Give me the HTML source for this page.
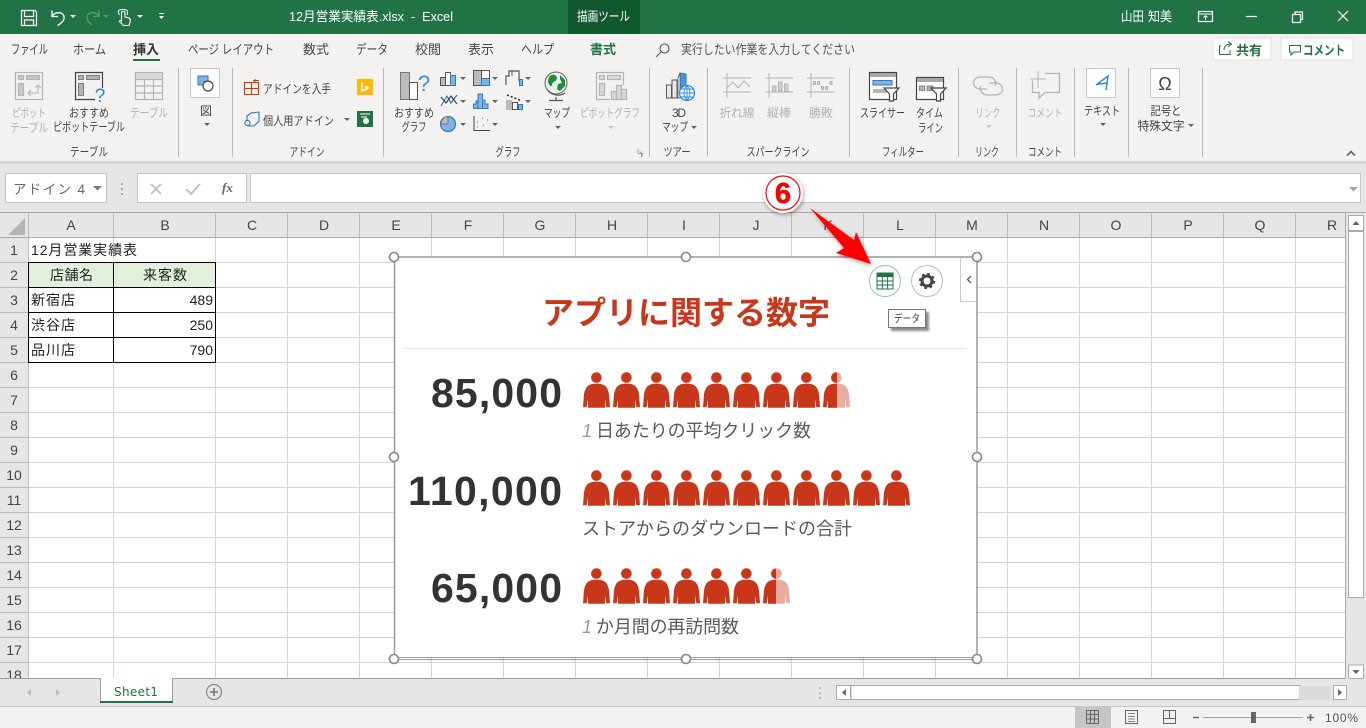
<!DOCTYPE html>
<html lang="ja"><head><meta charset="utf-8"><title>12月営業実績表.xlsx - Excel</title>
<style>
html,body{margin:0;padding:0;width:1366px;height:728px;overflow:hidden;background:#fff}
svg{display:block;position:absolute;left:0;top:0}
text{font-family:"Liberation Sans","Noto Sans CJK JP",sans-serif;font-size:11px;fill:#444}
.w text{fill:#fff;font-size:13px;white-space:pre}
.tab text{font-size:13px;fill:#444;text-anchor:start}
.l text{text-anchor:middle;fill:#444;font-size:12px}
.g text{text-anchor:middle;fill:#b1b1b1;font-size:12px}
.h text{text-anchor:middle;fill:#444;font-size:14px}
.c text{font-size:14px;fill:#222}
.sub text{font-size:18px;fill:#595959}
.num text{font-size:41px;font-weight:700;fill:#333;text-anchor:end}
</style></head><body>
<svg width="1366" height="728" viewBox="0 0 1366 728" xmlns="http://www.w3.org/2000/svg">
<defs>
<g id="p" transform="translate(0 -.7)"><circle cx="13.4" cy="5.3" r="5.3"/><path d="M13.5 11.3C18 11.3 21 12.3 23 14.5C25 17 25.7 20 26.1 23L27 35H23.3L22 27V35.4H5V27L3.7 35H0L.9 23C1.3 20 2 17 4 14.5C6 12.3 9 11.3 13.5 11.3Z"/></g>
<path id="ca" d="M0 0H6L3 3Z"/>
<filter id="sh" x="-30%" y="-30%" width="160%" height="160%"><feDropShadow dx="1" dy="2" stdDeviation="2" flood-color="#000" flood-opacity=".35"/></filter>
<filter id="sh2" x="-30%" y="-30%" width="170%" height="170%"><feDropShadow dx="3" dy="3" stdDeviation="1" flood-color="#000" flood-opacity=".45"/></filter>
<clipPath id="c1"><rect x="800" y="360" width="37" height="60"/></clipPath>
<clipPath id="c3"><rect x="760" y="560" width="16" height="60"/></clipPath>
</defs>

<!-- backgrounds -->
<rect width="1366" height="34" fill="#217346"/>
<rect x="568" width="72" height="34" fill="#10592f"/>
<rect y="34" width="1366" height="127" fill="#f3f2f1"/>
<rect y="161" width="1366" height="52" fill="#e6e6e6"/>
<rect y="161" width="1366" height="3" fill="#d6d6d6"/>

<!-- title bar -->
<g fill="none" stroke="#fff" stroke-width="1.2">
<path d="M21.5 10.5H35L36.5 12V25.5H21.5Z"/><path d="M24.5 10.5V16.5H33.5V10.5M24.5 25.5V20H33.5V25.5"/>
<path d="M52 10.5V16.5H58M52.5 16C55 11.5 63 11.5 64 16.5C64.8 20.5 61 23.5 57.5 25.5" stroke-width="1.3"/>
<path d="M99 10.5V16.5H93M98.5 16C96 11.5 88 11.5 87 16.5C86.4 20.5 89 23 92 25" stroke="#5c9b78" stroke-width="1.3"/>
<path d="M121.5 21V13C121.5 11 125 11 125 13V17L129 18C130.5 18.5 130.5 20 130 22L129 25.5H123.5L119.5 21.5C119.5 20.5 120.5 20 121.5 21Z" stroke-width="1.1"/>
<path d="M119.5 15C116.5 10 120 9.5 123 9.5C126 9.5 129 10 127 15" stroke-width="1"/>
<rect x="1198.5" y="11.5" width="14" height="10"/><path d="M1198.5 14H1212.5M1205.5 20V16M1203.5 17.5L1205.5 15.5L1207.5 17.5" stroke-width=".9"/>
<path d="M1246 16.5H1257" stroke-width="1.2"/>
<rect x="1292.5" y="14.5" width="8" height="8"/><path d="M1295 14V12H1302.5V19.5H1301"/>
<path d="M1338 11L1348 21M1348 11L1338 21" stroke-width="1.2"/>
</g>
<g fill="#fff"><use href="#ca" x="70" y="15"/><use href="#ca" x="137" y="15"/><path d="M159 13H164V14H159ZM159 16H164L161.5 19Z"/></g>
<use href="#ca" x="103" y="15" fill="#5c9b78"/>
<g class="w">
<text x="289" y="21" textLength="164" lengthAdjust="spacingAndGlyphs">12月営業実績表.xlsx  -  Excel</text>
<text x="577" y="21" textLength="53" lengthAdjust="spacingAndGlyphs">描画ツール</text>
<text x="1121" y="21" textLength="23" lengthAdjust="spacingAndGlyphs">山田</text>
<text x="1148" y="21" textLength="24" lengthAdjust="spacingAndGlyphs">知美</text>
</g>

<!-- ribbon tabs -->
<g class="tab">
<text x="11" y="54" textLength="37" lengthAdjust="spacingAndGlyphs">ファイル</text>
<text x="73" y="54" textLength="33" lengthAdjust="spacingAndGlyphs">ホーム</text>
<text x="133" y="54" textLength="26" style="font-weight:700;fill:#333">挿入</text>
<text x="188" y="54" textLength="86" lengthAdjust="spacingAndGlyphs">ページ レイアウト</text>
<text x="303" y="54" textLength="26">数式</text>
<text x="356" y="54" textLength="32" lengthAdjust="spacingAndGlyphs">データ</text>
<text x="415" y="54" textLength="26">校閲</text>
<text x="468" y="54" textLength="26">表示</text>
<text x="521" y="54" textLength="33" lengthAdjust="spacingAndGlyphs">ヘルプ</text>
<text x="590" y="54" textLength="26" style="fill:#217346;font-weight:700">書式</text>
<text x="681" y="54" textLength="174" lengthAdjust="spacingAndGlyphs" style="fill:#555">実行したい作業を入力してください</text>
</g>
<rect x="133" y="59" width="27" height="2" fill="#217346"/>
<g fill="none" stroke="#555" stroke-width="1.1"><circle cx="664.5" cy="48.5" r="4.5"/><path d="M661 52L656 57"/></g>
<rect x="1213" y="38" width="58" height="22" fill="#fff" stroke="#e2e2e2"/>
<rect x="1281" y="38" width="72" height="22" fill="#fff" stroke="#e2e2e2"/>
<g fill="none" stroke="#217346"><path d="M1221 46H1219.5V54.5H1230V50M1224 50C1224 46 1227 44 1231 44M1228 41.5L1231.5 44L1228 47"/><path d="M1289.5 45.5H1300.5V52H1294L1291 55V52H1289.5Z"/></g>
<text x="1236" y="55" textLength="26" style="fill:#217346;font-size:13px;font-weight:700">共有</text>
<text x="1303" y="55" textLength="42" lengthAdjust="spacingAndGlyphs" style="fill:#217346;font-size:13px;font-weight:700">コメント</text>

<!-- ribbon dividers -->
<path d="M178.5 68V157M232.5 68V157M383.5 68V157M649.5 68V157M707.5 68V157M849.5 68V157M958.5 68V157M1016.5 68V157M1074.5 68V157M1128.5 68V157M1202.5 68V157" stroke="#b8b8b8" fill="none"/>

<!-- ribbon icons: table group -->
<g fill="none" stroke="#b4b4b4" stroke-width="1.2">
<rect x="15.5" y="72.5" width="27" height="27" fill="#f3f2f1"/><rect x="18.5" y="75.5" width="5" height="4" fill="#c8c8c8"/><rect x="26.5" y="75.5" width="13" height="4" fill="#c8c8c8"/><rect x="18.5" y="83.5" width="5" height="12" fill="#c8c8c8"/>
<path d="M28 93H38V85M35 88L38 85L41 88M31 90L28 93L31 96" stroke-width="1"/>
<rect x="135.5" y="72.5" width="27" height="27"/><path d="M135.5 79.5H162.5M135.5 86H162.5M135.5 93H162.5M144.5 79.5V99.5M153.5 79.5V99.5"/><path d="M136 73H162V79H136Z" fill="#d8d8d8" stroke="none"/>
</g>
<g fill="none" stroke="#444" stroke-width="1.2"><path d="M102.5 88V72.5H75.5V99.5H95"/><rect x="78.5" y="75.5" width="5" height="4" fill="#b3b3b3" stroke="#666" stroke-width=".8"/><rect x="86.5" y="75.5" width="13" height="4" fill="#b3b3b3" stroke="#666" stroke-width=".8"/><rect x="78.5" y="83.5" width="5" height="12" fill="#b3b3b3" stroke="#666" stroke-width=".8"/></g>
<text x="100" y="102" style="font-size:19px;fill:#2e86d0" text-anchor="middle">?</text>
<rect x="190.5" y="68.5" width="29" height="29" fill="#fff" stroke="#c8c8c8"/>
<path d="M198 76H208V81.5H204V85H198Z" fill="#7fb3e4" stroke="#2b79c2"/><circle cx="208" cy="86" r="5" fill="#fff" stroke="#444" stroke-width="1.2"/>
<use href="#ca" x="204" y="123" fill="#666"/>

<!-- add-ins -->
<path d="M244.5 82.5H258.5V94.5H244.5ZM251.5 82.5V94.5M244.5 88.5H258.5M255 83V79M253 80.5H259" fill="none" stroke="#d83b01" stroke-width="1.1"/>
<rect x="357" y="79" width="16" height="16" fill="#ffb900"/><path d="M362 82V91L368.5 88L365 86.3" fill="none" stroke="#fff" stroke-width="1.6"/>
<path d="M252 113L259 112V121L254 126H249L246 123" fill="none" stroke="#2b79c2" stroke-width="1.1"/><path d="M252 112.5L247 116V120" fill="none" stroke="#2b79c2" stroke-width="1.1"/><circle cx="247.5" cy="123" r="2.6" fill="#f3f2f1" stroke="#2b79c2" stroke-width="1.1"/>
<rect x="357" y="111" width="16" height="16" fill="#217346"/><circle cx="366" cy="121" r="3" fill="#fff"/><path d="M360 114H370M361 117H367" stroke="#fff"/>
<use href="#ca" x="344" y="118" fill="#666"/>

<!-- charts -->
<rect x="400.5" y="72.5" width="9" height="27" fill="#bbb" stroke="#777"/><rect x="409.5" y="82.5" width="8" height="17" fill="#fff" stroke="#555"/>
<text x="424" y="91" style="font-size:22px;fill:#3a8fd6" text-anchor="middle">?</text>
<g stroke-width="1">
<path d="M440.5 85.5V77.5H445.5V85.5Z" fill="#bbb" stroke="#555"/><path d="M445.5 85.5V72.5H450.5V85.5Z" fill="#fff" stroke="#555"/><path d="M450.5 85.5V75.5H455.5V85.5Z" fill="#7fb3e4" stroke="#2b79c2"/>
<path d="M441 106L447 96L451 103L457 95" fill="none" stroke="#2b79c2" stroke-width="1.2"/><path d="M441 97L446 103L451 96L457 104" fill="none" stroke="#444" stroke-width="1.2"/>
<circle cx="448" cy="124" r="7.5" fill="#7fb3e4" stroke="#2b79c2" stroke-width="1.2"/><path d="M448 124H441C441 120 444 116.5 448 116.5Z" fill="#bbb" stroke="#777"/>
<rect x="473.5" y="70.5" width="8" height="15" fill="#bbb" stroke="#555"/><rect x="481.5" y="70.5" width="8" height="8" fill="#fff" stroke="#555"/><rect x="481.5" y="78.5" width="8" height="7" fill="#7fb3e4" stroke="#2b79c2"/>
<path d="M473.5 108.5V104H476V101H478V94H482.5V100H485V104H488V108.5Z" fill="#7fb3e4" stroke="#2b79c2"/><path d="M478 108V101M482.5 108V101" stroke="#2b79c2"/>
<path d="M474 116V130.5H490" fill="none" stroke="#444"/><path d="M477 122h2M482 118h2M477 127h2M483 125h2M487 120h1" stroke="#2b79c2" stroke-dasharray="1 1"/>
<path d="M506 85V76H509V71H519V80H522V85" fill="none" stroke="#555" stroke-width="1.2"/><path d="M512 71V76" stroke="#555"/><rect x="519.5" y="79.5" width="3" height="6" fill="#7fb3e4" stroke="#2b79c2"/>
<rect x="506" y="100" width="6" height="10" fill="#bbb"/><rect x="512.5" y="102.5" width="5" height="7" fill="#fff" stroke="#555"/><rect x="518.5" y="104.5" width="4" height="5" fill="#7fb3e4" stroke="#2b79c2"/><path d="M507 95L522 101" stroke="#333" stroke-width="1.6" stroke-dasharray="2 2"/>
</g>
<g fill="#666"><use href="#ca" x="460" y="77"/><use href="#ca" x="460" y="100"/><use href="#ca" x="460" y="123"/><use href="#ca" x="492" y="77"/><use href="#ca" x="492" y="100"/><use href="#ca" x="492" y="123"/><use href="#ca" x="525" y="77"/><use href="#ca" x="525" y="100"/><use href="#ca" x="555" y="126"/></g>
<circle cx="556" cy="83" r="11" fill="#e8f2e8" stroke="#666"/><path d="M549 77C552 73 557 75 557 78C557 82 552 81 552 85C551 88 548 84 548 81ZM560 75L565 80L565 86L560 91L557 89L558 84L562 83L560 79Z" fill="#218a3f"/><path d="M547 89C550 95 559 97 565 93M556 97V100M549 100.5H563" fill="none" stroke="#555" stroke-width="1.2"/>
<g fill="none" stroke="#b4b4b4" stroke-width="1.2"><path d="M623.5 85V72.5H596.5V99.5H610"/><rect x="599.5" y="75.5" width="5" height="4" fill="#d8d8d8"/><rect x="607.5" y="75.5" width="13" height="4" fill="#d8d8d8"/><rect x="599.5" y="83.5" width="5" height="12" fill="#d8d8d8"/><rect x="611.5" y="91.5" width="5" height="8" fill="#d8d8d8"/><rect x="616.5" y="85.5" width="5" height="14" fill="#d8d8d8"/><rect x="621.5" y="89.5" width="5" height="10" fill="#d8d8d8"/></g>
<use href="#ca" x="608" y="126" fill="#c0c0c0"/>

<!-- 3D map -->
<path d="M666.5 85H671.5V98H666.5ZM672 80H677V98H672Z" fill="#e8e8e8" stroke="#555"/><path d="M680 73L686 74V92H680Z" fill="#4a96dc" stroke="#2b79c2"/><path d="M678 98V78L680 73V98Z" fill="#fff" stroke="#555" stroke-width=".8"/>
<circle cx="687" cy="93" r="7.5" fill="#fff" stroke="#2b8cdc" stroke-width="1.3"/><path d="M679.5 93H694.5M687 85.5V100.5M681 89H693M681 97H693M687 85.5C683 90 683 96 687 100.5M687 85.5C691 90 691 96 687 100.5" fill="none" stroke="#2b8cdc" stroke-width=".9"/>
<use href="#ca" x="691" y="126" fill="#666"/>

<!-- sparklines -->
<g fill="none" stroke="#b4b4b4" stroke-width="1">
<path d="M723 78H751M723 92H751M727 73V98"/><path d="M727 88L733 82L738 88L744 81L750 87"/>
<path d="M765 78H793M765 92H793M769 73V98"/><path d="M772.5 91V86H776V91ZM778.5 91V82H782V91ZM784.5 91V84H788V91Z" fill="#d0d0d0"/>
<path d="M807 78H835M807 92H835M811 73V98"/><path d="M813.5 81.5h2v3h-2zM817.5 81.5h2v3h-2zM821.5 86.5h2v3h-2zM825.5 86.5h2v3h-2zM830 81.5h2v3h-2z" fill="#d0d0d0"/>
</g>

<!-- filters -->
<rect x="869.5" y="72.5" width="27" height="27" fill="#fff" stroke="#444" stroke-width="1.2"/><rect x="870" y="73" width="26" height="4" fill="#a8a8a8"/><rect x="873" y="80.5" width="19" height="4.5" fill="#7fb3e4" stroke="#2b79c2"/><rect x="873" y="89" width="14" height="4" fill="#b3b3b3"/>
<path d="M884 88H899L893.5 94V101H889.5V94Z" fill="#fff" stroke="#444" stroke-width="1.2"/>
<rect x="916.5" y="77.5" width="27" height="22" fill="#fff" stroke="#444" stroke-width="1.2"/><rect x="917" y="78" width="26" height="4" fill="#a8a8a8"/><rect x="919.5" y="86" width="5" height="4.5" fill="#b3b3b3" stroke="#666" stroke-width=".7"/><rect x="927" y="86" width="6" height="4.5" fill="#b3b3b3" stroke="#666" stroke-width=".7"/>
<path d="M931 88H946L940.5 94V101H936.5V94Z" fill="#fff" stroke="#444" stroke-width="1.2"/>

<!-- link / comment -->
<g fill="none" stroke="#b4b4b4" stroke-width="1.3"><path d="M987 89H981C971 89 971 77 981 77H988C995 77 997 83 995 86"/><path d="M989 83H995C1005 83 1005 95 995 95H988C981 95 979 89 981 86"/>
<path d="M1032.5 80.5V92.5H1039V98L1045 92.5H1059.5V73.5H1045"/><path d="M1030 79H1046M1038 71V88" stroke-width="1"/></g>
<use href="#ca" x="986" y="125" fill="#c0c0c0"/>

<!-- text / symbol -->
<rect x="1086.5" y="68.5" width="29" height="29" fill="#fff" stroke="#c8c8c8"/>
<path d="M1096 85L1108 76L1106 90M1096.5 84.5L1106.5 83" fill="none" stroke="#2f8bd6" stroke-width="1.5"/>
<use href="#ca" x="1100" y="123" fill="#666"/>
<rect x="1150.5" y="68.5" width="29" height="29" fill="#fff" stroke="#c8c8c8"/>
<text x="1165" y="90" text-anchor="middle" style="font-size:18px;fill:#444">Ω</text>
<use href="#ca" x="1188" y="124" fill="#666"/>
<path d="M1347 155.5L1351 151.5L1355 155.5" fill="none" stroke="#666" stroke-width="1.6"/>
<path d="M638 153.5H643M641.5 157.5V153.5M638 153V149M640 151.5L643 156" fill="none" stroke="#888" stroke-width=".8"/>

<!-- ribbon labels -->
<g class="l">
<text x="89" y="117" textLength="40" lengthAdjust="spacingAndGlyphs">おすすめ</text>
<text x="89" y="131" textLength="72" lengthAdjust="spacingAndGlyphs">ピボットテーブル</text>
<text x="206" y="115" textLength="12" lengthAdjust="spacingAndGlyphs">図</text>
<text x="414" y="117" textLength="40" lengthAdjust="spacingAndGlyphs">おすすめ</text>
<text x="414" y="131" textLength="25" lengthAdjust="spacingAndGlyphs">グラフ</text>
<text x="557" y="117" textLength="26" lengthAdjust="spacingAndGlyphs">マップ</text>
<text x="679" y="117" textLength="14">3D</text>
<text x="675" y="131" textLength="26" lengthAdjust="spacingAndGlyphs">マップ</text>
<text x="882.5" y="117" textLength="45" lengthAdjust="spacingAndGlyphs">スライサー</text>
<text x="929.5" y="117" textLength="27" lengthAdjust="spacingAndGlyphs">タイム</text>
<text x="930.5" y="132" textLength="25" lengthAdjust="spacingAndGlyphs">ライン</text>
<text x="1102" y="115" textLength="36" lengthAdjust="spacingAndGlyphs">テキスト</text>
<text x="1166" y="115" textLength="31" lengthAdjust="spacingAndGlyphs">記号と</text>
<text x="1161" y="130" textLength="47" lengthAdjust="spacingAndGlyphs">特殊文字</text>
<text x="89" y="156" textLength="38" lengthAdjust="spacingAndGlyphs">テーブル</text>
<text x="307" y="156" textLength="35" lengthAdjust="spacingAndGlyphs">アドイン</text>
<text x="508" y="156" textLength="25" lengthAdjust="spacingAndGlyphs">グラフ</text>
<text x="677" y="156" textLength="27" lengthAdjust="spacingAndGlyphs">ツアー</text>
<text x="778" y="156" textLength="63" lengthAdjust="spacingAndGlyphs">スパークライン</text>
<text x="903" y="156" textLength="42" lengthAdjust="spacingAndGlyphs">フィルター</text>
<text x="987" y="156" textLength="24" lengthAdjust="spacingAndGlyphs">リンク</text>
<text x="1045" y="156" textLength="34" lengthAdjust="spacingAndGlyphs">コメント</text>
</g>
<text x="263" y="93" textLength="68" lengthAdjust="spacingAndGlyphs" style="fill:#444;font-size:12px">アドインを入手</text>
<text x="263" y="125" textLength="71" lengthAdjust="spacingAndGlyphs" style="fill:#444;font-size:12px">個人用アドイン</text>
<g class="g">
<text x="29" y="117" textLength="34" lengthAdjust="spacingAndGlyphs">ピボット</text>
<text x="29" y="132" textLength="38" lengthAdjust="spacingAndGlyphs">テーブル</text>
<text x="149" y="117" textLength="38" lengthAdjust="spacingAndGlyphs">テーブル</text>
<text x="610" y="117" textLength="60" lengthAdjust="spacingAndGlyphs">ピボットグラフ</text>
<text x="737" y="117" textLength="35" lengthAdjust="spacingAndGlyphs">折れ線</text>
<text x="779" y="117" textLength="24">縦棒</text>
<text x="821" y="117" textLength="24">勝敗</text>
<text x="988" y="117" textLength="25" lengthAdjust="spacingAndGlyphs">リンク</text>
<text x="1045" y="117" textLength="35" lengthAdjust="spacingAndGlyphs">コメント</text>
</g>

<!-- formula bar -->
<rect x="5.5" y="173.5" width="101" height="29" fill="#fff" stroke="#c6c6c6"/>
<text x="13" y="194" textLength="72" style="font-size:13.5px;fill:#666">アドイン 4</text>
<path d="M93 186H102L97.5 190.5Z" fill="#777"/>
<path d="M122 183v2M122 188v2M122 193v2" stroke="#999" stroke-width="1.6"/>
<rect x="137.5" y="173.5" width="109" height="29" fill="#fff" stroke="#c6c6c6"/>
<path d="M151 184L161 194M161 184L151 194M186 189L191 194L200 184" fill="none" stroke="#bdbdbd" stroke-width="1.8"/>
<text x="222" y="192" style="font-family:'Liberation Serif',serif;font-style:italic;font-weight:700;font-size:13px;fill:#666">fx</text>
<rect x="250.5" y="173.5" width="1110" height="29" fill="#fff" stroke="#c6c6c6"/>
<path d="M1349 187H1358L1353.5 191.5Z" fill="#a5a5a5"/>

<!-- sheet -->
<rect y="213" width="1346" height="24" fill="#e6e6e6"/>
<rect y="213" width="28" height="466" fill="#e6e6e6"/>
<path d="M8 235L25 218V235Z" fill="#b5b5b5"/>
<path d="M29 262.5H1345M29 287.5H1345M29 312.5H1345M29 337.5H1345M29 362.5H1345M29 387.5H1345M29 412.5H1345M29 437.5H1345M29 462.5H1345M29 487.5H1345M29 512.5H1345M29 537.5H1345M29 562.5H1345M29 587.5H1345M29 612.5H1345M29 637.5H1345M29 662.5H1345" stroke="#d4d4d4" fill="none"/>
<path d="M113.5 237V678M215.5 237V678M287.5 237V678M359.5 237V678M431.5 237V678M503.5 237V678M575.5 237V678M647.5 237V678M719.5 237V678M791.5 237V678M863.5 237V678M935.5 237V678M1007.5 237V678M1079.5 237V678M1151.5 237V678M1223.5 237V678M1295.5 237V678" stroke="#d4d4d4" fill="none"/>
<path d="M28.5 213V678M0 262.5H28M0 287.5H28M0 312.5H28M0 337.5H28M0 362.5H28M0 387.5H28M0 412.5H28M0 437.5H28M0 462.5H28M0 487.5H28M0 512.5H28M0 537.5H28M0 562.5H28M0 587.5H28M0 612.5H28M0 637.5H28M0 662.5H28" stroke="#bbb" fill="none"/>
<path d="M113.5 213V237M215.5 213V237M287.5 213V237M359.5 213V237M431.5 213V237M503.5 213V237M575.5 213V237M647.5 213V237M719.5 213V237M791.5 213V237M863.5 213V237M935.5 213V237M1007.5 213V237M1079.5 213V237M1151.5 213V237M1223.5 213V237M1295.5 213V237" stroke="#bbb" fill="none"/>
<path d="M0 237.5H1346M0 212.5H1366" stroke="#aaa" fill="none"/>
<rect x="1345" y="213" width="1" height="466" fill="#aaa"/>

<g class="h">
<text x="71" y="230">A</text><text x="165" y="230">B</text><text x="252" y="230">C</text><text x="324" y="230">D</text><text x="396" y="230">E</text><text x="468" y="230">F</text><text x="540" y="230">G</text><text x="612" y="230">H</text><text x="684" y="230">I</text><text x="756" y="230">J</text><text x="828" y="230">K</text><text x="900" y="230">L</text><text x="972" y="230">M</text><text x="1044" y="230">N</text><text x="1116" y="230">O</text><text x="1188" y="230">P</text><text x="1260" y="230">Q</text><text x="1332" y="230">R</text>
<text x="14" y="255">1</text><text x="14" y="280">2</text><text x="14" y="305">3</text><text x="14" y="330">4</text><text x="14" y="355">5</text><text x="14" y="380">6</text><text x="14" y="405">7</text><text x="14" y="430">8</text><text x="14" y="455">9</text><text x="14" y="480">10</text><text x="14" y="505">11</text><text x="14" y="530">12</text><text x="14" y="555">13</text><text x="14" y="580">14</text><text x="14" y="605">15</text><text x="14" y="630">16</text><text x="14" y="655">17</text><text x="14" y="680">18</text>
</g>

<!-- cells -->
<rect x="29" y="263" width="186" height="24" fill="#e2efda"/>
<path d="M28.5 262.5H215.5V362.5H28.5ZM28.5 287.5H215.5M28.5 312.5H215.5M28.5 337.5H215.5M113.5 262.5V362.5" fill="none" stroke="#000"/>
<g class="c">
<text x="31" y="255" textLength="106">12月営業実績表</text>
<text x="50" y="280" textLength="43">店舗名</text>
<text x="143" y="280" textLength="44">来客数</text>
<text x="31" y="305" textLength="44">新宿店</text>
<text x="31" y="330" textLength="44">渋谷店</text>
<text x="31" y="355" textLength="44">品川店</text>
<text x="213" y="305" text-anchor="end">489</text>
<text x="213" y="330" text-anchor="end">250</text>
<text x="213" y="355" text-anchor="end">790</text>
</g>

<!-- chart object -->
<rect x="394.5" y="257" width="582.5" height="401" fill="#fff"/>
<path d="M394.5 257V659M977 257V659" stroke="#9a9a9a" stroke-width="1.5" fill="none"/>
<path d="M394 257H977" stroke="#9a9a9a" stroke-width="1.4" fill="none"/>
<path d="M394 657.5H977M394 659.5H977" stroke="#9a9a9a" fill="none"/>
<text x="686" y="324" text-anchor="middle" textLength="288" style="font-size:32px;font-weight:700;fill:#c9371a">アプリに関する数字</text>
<path d="M405 348.5H967" stroke="#e4e4e4"/>
<g class="num">
<text x="562" y="407" textLength="131">85,000</text>
<text x="562" y="505" textLength="154">110,000</text>
<text x="562" y="602" textLength="131">65,000</text>
</g>
<g fill="#c9371a">
<use href="#p" x="583" y="373"/><use href="#p" x="613" y="373"/><use href="#p" x="643" y="373"/><use href="#p" x="673" y="373"/><use href="#p" x="703" y="373"/><use href="#p" x="733" y="373"/><use href="#p" x="763" y="373"/><use href="#p" x="793" y="373"/>
<use href="#p" x="823" y="373" fill="#e9ada0"/><g clip-path="url(#c1)"><use href="#p" x="823" y="373"/></g>
<use href="#p" x="583" y="471"/><use href="#p" x="613" y="471"/><use href="#p" x="643" y="471"/><use href="#p" x="673" y="471"/><use href="#p" x="703" y="471"/><use href="#p" x="733" y="471"/><use href="#p" x="763" y="471"/><use href="#p" x="793" y="471"/><use href="#p" x="823" y="471"/><use href="#p" x="853" y="471"/><use href="#p" x="883" y="471"/>
<use href="#p" x="583" y="569"/><use href="#p" x="613" y="569"/><use href="#p" x="643" y="569"/><use href="#p" x="673" y="569"/><use href="#p" x="703" y="569"/><use href="#p" x="733" y="569"/>
<use href="#p" x="763" y="569" fill="#e9ada0"/><g clip-path="url(#c3)"><use href="#p" x="763" y="569"/></g>
</g>
<g class="sub">
<text x="582" y="437" style="font-style:italic;fill:#999">1</text><text x="596" y="437" textLength="215">日あたりの平均クリック数</text>
<text x="582" y="535" textLength="270">ストアからのダウンロードの合計</text>
<text x="582" y="633" style="font-style:italic;fill:#999">1</text><text x="596" y="633" textLength="143">か月間の再訪問数</text>
</g>
<g fill="#fff" stroke="#888" stroke-width="1.6"><circle cx="394" cy="257" r="4.5"/><circle cx="686" cy="257" r="4.5"/><circle cx="977" cy="257" r="4.5"/><circle cx="394" cy="457" r="4.5"/><circle cx="977" cy="457" r="4.5"/><circle cx="394" cy="659" r="4.5"/><circle cx="686" cy="659" r="4.5"/><circle cx="977" cy="659" r="4.5"/></g>
<path d="M960.5 258V301.5H976" fill="#fff" stroke="#ccc"/>
<path d="M971 276L967.5 279.5L971 283" fill="none" stroke="#444" stroke-width="1.2"/>
<circle cx="885" cy="281" r="15.5" fill="#fff" stroke="#8fc7a8"/>
<rect x="877" y="273" width="16" height="16" fill="#fff" stroke="#217346"/><rect x="877" y="273" width="16" height="4" fill="#217346"/><path d="M877 281H893M877 285H893M882.3 277V289M887.6 277V289" stroke="#217346" fill="none"/>
<circle cx="927" cy="281" r="15.5" fill="#fff" stroke="#bbb"/>
<circle cx="927" cy="281" r="5" fill="none" stroke="#444" stroke-width="3"/><circle cx="927" cy="281" r="6.8" fill="none" stroke="#444" stroke-width="2.6" stroke-dasharray="2.6 2.74"/>
<rect x="888.5" y="309.5" width="37" height="18" fill="#fff" stroke="#777" filter="url(#sh2)"/>
<text x="907" y="322" text-anchor="middle" textLength="26" lengthAdjust="spacingAndGlyphs" style="font-size:11px;fill:#444">データ</text>

<!-- callout -->
<circle cx="783" cy="193" r="20" fill="#fff" filter="url(#sh)"/>
<circle cx="783" cy="193" r="17" fill="#fff" stroke="#f00" stroke-width="1.2"/>
<text x="783" y="203" text-anchor="middle" style="font-size:29px;font-weight:700;fill:#f00;stroke:#f00;stroke-width:.6">6</text>
<path d="M810 208L854 240L856 232L871 264L836 253L844 248Z" fill="#f00" filter="url(#sh)"/>

<!-- vertical scrollbar -->
<rect x="1346" y="213" width="20" height="466" fill="#e6e6e6"/>
<rect x="1348.5" y="231.5" width="15" height="366" fill="#fff" stroke="#ababab"/>
<rect x="1348.5" y="215.5" width="15" height="15" fill="#fff" stroke="#ababab"/>
<rect x="1348.5" y="665" width="15" height="13.5" fill="#fff" stroke="#ababab"/>
<path d="M1352.5 225L1356 221L1359.5 225Z" fill="#666"/><path d="M1352.5 670H1359.5L1356 674Z" fill="#666"/>

<!-- tab bar -->
<rect y="678" width="1346" height="28" fill="#e6e6e6"/>
<rect x="1346" y="679" width="20" height="27" fill="#e6e6e6"/>
<path d="M0 678.5H1346" stroke="#9e9e9e"/>
<path d="M31 689L27 692.5L31 696ZM56 689L60 692.5L56 696Z" fill="#bdbdbd"/>
<path d="M100.5 678V701.5H172.5V678" fill="#fff" stroke="#9e9e9e"/>
<rect x="100" y="701" width="73" height="2" fill="#217346"/>
<rect x="101" y="677" width="71" height="3" fill="#fff"/>
<text x="114" y="696" textLength="44" style="font-family:'DejaVu Sans',sans-serif;font-size:12px;fill:#217346">Sheet1</text>
<circle cx="214" cy="692" r="7.5" fill="none" stroke="#8a8a8a" stroke-width="1.2"/><path d="M210 692H218M214 688V696" stroke="#777" stroke-width="1.6"/>
<path d="M820 687v2M820 692v2M820 697v2" stroke="#aaa" stroke-width="1.4"/>
<rect x="836.5" y="685.5" width="14" height="14" fill="#fff" stroke="#ababab"/>
<rect x="851" y="685.5" width="449" height="14" fill="#fff" stroke="#ababab"/>
<rect x="1300" y="686" width="30" height="14" fill="#dadada"/>
<rect x="1333.5" y="685.5" width="13" height="14" fill="#fff" stroke="#ababab"/>
<path d="M846 689V696L842 692.5ZM1338 689V696L1342 692.5Z" fill="#666"/>

<!-- status bar -->
<rect y="706" width="1366" height="22" fill="#f3f2f1"/>
<path d="M0 706.5H1366" stroke="#c6c6c6"/>
<rect x="1075" y="707" width="36" height="21" fill="#c6c5c3"/>
<g fill="none" stroke="#666"><path d="M1086.5 710.5H1098.5V723.5H1086.5ZM1086.5 714.5H1098.5M1086.5 719H1098.5M1090.5 710.5V723.5M1094.5 710.5V723.5"/>
<rect x="1125.5" y="710.5" width="12" height="13"/><path d="M1128 713.5H1135M1128 716.5H1135M1128 719H1135M1128 721.5H1135" stroke-width=".8"/>
<path d="M1163.5 710.5H1175.5V723.5H1163.5ZM1163.5 718.5H1175.5M1169.5 710.5V718.5"/></g>
<path d="M1193 717.5H1199M1307 717.5H1314M1310.5 714V721" stroke="#666" stroke-width="1.6"/>
<path d="M1203 717.5H1303" stroke="#a5a5a5"/><rect x="1251" y="712" width="5" height="11" fill="#666"/>
<text x="1325" y="722" textLength="33" style="font-size:12px;fill:#555">100%</text>
</svg>
</body></html>
